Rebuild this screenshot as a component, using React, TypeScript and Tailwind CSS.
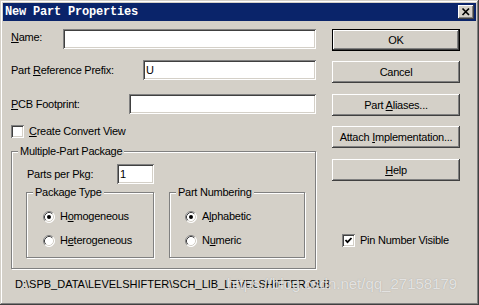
import React from 'react';

const raised =
  'shadow-[inset_-1px_-1px_0_#404040,inset_1px_1px_0_#ffffff,inset_-2px_-2px_0_#808080,inset_2px_2px_0_#d4d0c8]';
const sunken =
  'shadow-[inset_1px_1px_0_#808080,inset_-1px_-1px_0_#ffffff,inset_2px_2px_0_#404040,inset_-2px_-2px_0_#d4d0c8]';
const etched = 'border border-[#808080] shadow-[1px_1px_0_#ffffff,inset_1px_1px_0_#ffffff]';

const U: React.FC<{ children: React.ReactNode }> = ({ children }) => (
  <span className="underline underline-offset-[1px] decoration-[1px]">{children}</span>
);

const Field: React.FC<{ className: string; value?: string }> = ({ className, value }) => (
  <div className={`h-[20px] bg-white pl-[3px] flex items-center ${sunken} ${className}`}>
    {value}
  </div>
);

const Btn: React.FC<{ children: React.ReactNode; isDefault?: boolean; className?: string }> = ({
  children,
  isDefault,
  className = '',
}) => (
  <div
    className={`h-[22px] w-[128px] flex items-center justify-center ${raised} ${
      isDefault ? 'border border-black' : ''
    } ${className}`}
  >
    <span>{children}</span>
  </div>
);

const Check: React.FC<{ checked?: boolean }> = ({ checked }) => (
  <div className={`w-[13px] h-[13px] shrink-0 bg-white ${sunken}`}>
    {checked && (
      <svg width="13" height="13" viewBox="0 0 13 13">
        <polyline points="3.5,6 5.5,8.2 9.5,4" fill="none" stroke="#000" strokeWidth="1.8" />
      </svg>
    )}
  </div>
);

const Radio: React.FC<{ checked?: boolean }> = ({ checked }) => (
  <svg width="12" height="12" viewBox="0 0 12 12" className="shrink-0">
    <circle cx="6" cy="6" r="5.5" fill="#fff" />
    <path d="M2.11 9.89 A5.5 5.5 0 0 1 9.89 2.11" fill="none" stroke="#808080" />
    <path d="M9.89 2.11 A5.5 5.5 0 0 1 2.11 9.89" fill="none" stroke="#ffffff" />
    <path d="M2.82 9.18 A4.5 4.5 0 0 1 9.18 2.82" fill="none" stroke="#404040" />
    <path d="M9.18 2.82 A4.5 4.5 0 0 1 2.82 9.18" fill="none" stroke="#d4d0c8" />
    {checked && <circle cx="6" cy="6" r="2" fill="#000" />}
  </svg>
);

const Legend: React.FC<{ children: React.ReactNode }> = ({ children }) => (
  <div className="-mt-[7px] ml-[6px] self-start h-[13px] leading-[13px] px-[2px] bg-[#d4d0c8]">
    {children}
  </div>
);

const RadioRow: React.FC<{ checked?: boolean; children: React.ReactNode; className: string }> = ({
  checked,
  children,
  className,
}) => (
  <div className={`mt-[11px] h-[13px] flex items-center ${className}`}>
    <Radio checked={checked} />
    <span className="ml-[5px] leading-[13px]">{children}</span>
  </div>
);

const App: React.FC = () => {
  return (
    <div
      className={`relative w-[479px] h-[305px] p-[3px] flex flex-col bg-[#d4d0c8] text-black text-[11px] tracking-[-0.25px] font-['Liberation_Sans',Arial,sans-serif] overflow-hidden shadow-[inset_-1px_-1px_0_#404040,inset_1px_1px_0_#d4d0c8,inset_-2px_-2px_0_#808080,inset_2px_2px_0_#ffffff]`}
    >
      {/* title bar */}
      <div className="h-[18px] bg-[#0a246a] flex items-center pl-[2px] pr-[2px]">
        <span className="text-white font-bold text-[12px] tracking-[-0.2px] font-['Liberation_Mono','Courier_New',monospace]">
          New Part Properties
        </span>
        <div className={`ml-auto w-[16px] h-[14px] bg-[#d4d0c8] ${raised}`}>
          <svg width="16" height="14" viewBox="0 0 16 14">
            <path d="M4.5 3.5 L11 10 M11 3.5 L4.5 10" stroke="#000" strokeWidth="1.7" />
          </svg>
        </div>
      </div>

      <div className="flex pl-[8px] pt-[8px]">
        {/* left column */}
        <div className="w-[305px] flex flex-col">
          <div className="h-[20px] flex items-center justify-between">
            <span className="mb-[4px]">
              <U>N</U>ame:
            </span>
            <Field className="w-[253px]" />
          </div>
          <div className="mt-[11px] h-[20px] flex items-center justify-between">
            <span>
              Part <U>R</U>eference Prefix:
            </span>
            <Field className="w-[173px]" value="U" />
          </div>
          <div className="mt-[14px] h-[20px] flex items-center justify-between">
            <span>
              <U>P</U>CB Footprint:
            </span>
            <Field className="w-[187px]" />
          </div>
          <div className="mt-[11px] h-[13px] flex items-center">
            <Check />
            <span className="ml-[5px] leading-[13px]">
              <U>C</U>reate Convert View
            </span>
          </div>

          <div className={`mt-[13px] h-[118px] flex flex-col ${etched}`}>
            <Legend>Multiple-Part Package</Legend>
            <div className="mt-[6px] h-[20px] flex items-center">
              <span className="ml-[15px] w-[90px]">Parts per Pkg:</span>
              <Field className="w-[37px]" value="1" />
            </div>
            <div className="mt-[8px] ml-[14px] flex">
              <div className={`w-[128px] h-[66px] flex flex-col ${etched}`}>
                <Legend>Package Type</Legend>
                <RadioRow checked className="ml-[16px]">
                  H<U>o</U>mogeneous
                </RadioRow>
                <RadioRow className="ml-[16px]">
                  H<U>e</U>terogeneous
                </RadioRow>
              </div>
              <div className={`ml-[15px] w-[136px] h-[66px] flex flex-col ${etched}`}>
                <Legend>Part Numbering</Legend>
                <RadioRow checked className="ml-[15px]">
                  A<U>l</U>phabetic
                </RadioRow>
                <RadioRow className="ml-[15px]">
                  N<U>u</U>meric
                </RadioRow>
              </div>
            </div>
          </div>
        </div>

        {/* right column */}
        <div className="ml-[16px] w-[128px] flex flex-col">
          <Btn isDefault>OK</Btn>
          <Btn className="mt-[10px]">Cancel</Btn>
          <Btn className="mt-[11px]">
            Part <U>A</U>liases...
          </Btn>
          <Btn className="mt-[10px]">
            Attach <U>I</U>mplementation...
          </Btn>
          <Btn className="mt-[11px]">
            <U>H</U>elp
          </Btn>
          <div className="mt-[53px] ml-[10px] h-[13px] flex items-center">
            <Check checked />
            <span className="ml-[5px] leading-[13px]">Pin Number Visible</span>
          </div>
        </div>
      </div>

      <div className="mt-[9px] ml-[12px] h-[13px] leading-[13px] tracking-normal">
        {'D:\\SPB_DATA\\LEVELSHIFTER\\SCH_LIB_LEVELSHIFTER.OLB'}
      </div>

      {/* watermark */}
      <div className="absolute left-[227px] top-[275px] text-[15px] tracking-normal leading-[18px] text-white/70 [text-shadow:0_0_1px_rgba(120,120,120,0.6)]">
        https://blog.csdn.net/qq_27158179
      </div>
    </div>
  );
};

export default App;
